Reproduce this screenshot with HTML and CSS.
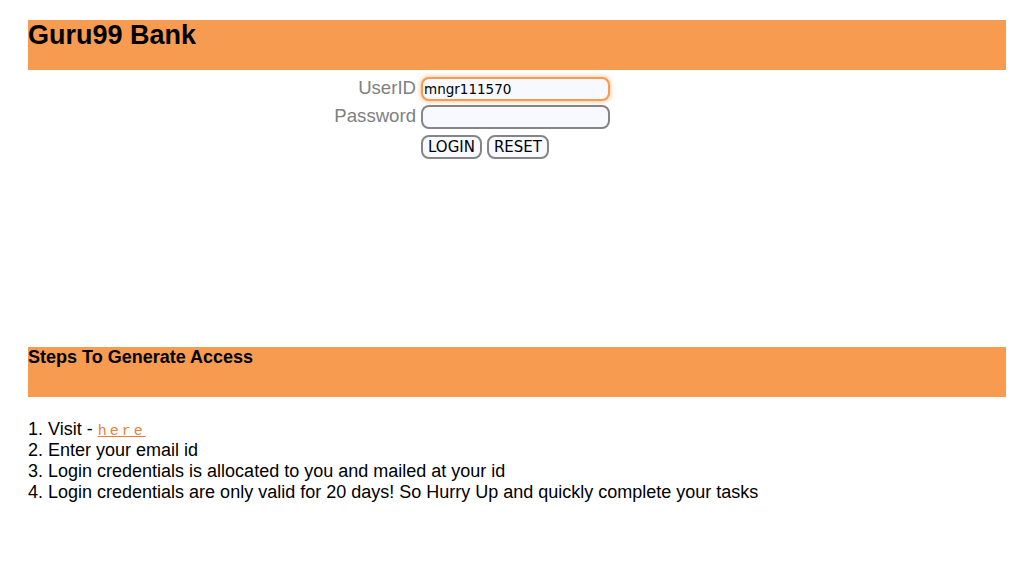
FILE: index.html
```html
<!DOCTYPE html>
<html>
<head>
<meta charset="utf-8">
<title>Guru99 Bank</title>
<link rel="stylesheet" href="styles.css">
</head>
<body>
<div class="page">
  <div class="band band-top">
    <h2 class="brand">Guru99 Bank</h2>
  </div>
  <form class="login">
    <label class="lbl" for="uid">UserID</label>
    <input id="uid" class="field focused" type="text" value="mngr111570">
    <label class="lbl" for="pwd">Password</label>
    <input id="pwd" class="field" type="password">
    <span></span>
    <div class="btns">
      <button type="button" class="btn">LOGIN</button>
      <button type="button" class="btn">RESET</button>
    </div>
  </form>
  <div class="band band-steps">
    <h3 class="steps-title">Steps To Generate Access</h3>
  </div>
  <ol class="steps">
    <li>1. Visit - <a class="here" href="#">here</a></li>
    <li>2. Enter your email id</li>
    <li>3. Login credentials is allocated to you and mailed at your id</li>
    <li>4. Login credentials are only valid for 20 days! So Hurry Up and quickly complete your tasks</li>
  </ol>
</div>
</body>
</html>
```

FILE: styles.css
```css
html, body {
  margin: 0;
  padding: 0;
  background: #ffffff;
}
.page {
  padding: 20px 28px 0 28px;
  font-family: "Liberation Sans", Arial, sans-serif;
  color: #000;
}
.band {
  background: #f79b51;
  height: 50px;
  box-sizing: border-box;
}
.brand {
  margin: 0;
  font-size: 27px;
  font-weight: bold;
  line-height: 30px;
}
.login {
  display: grid;
  grid-template-columns: 388px auto;
  justify-content: start;
  column-gap: 5px;
  row-gap: 4px;
  margin-top: 7px;
  align-items: center;
}
.lbl {
  text-align: right;
  color: #808080;
  font-size: 18.6px;
  line-height: 20px;
  align-self: start;
  margin-top: 1px;
}
.field {
  width: 189px;
  height: 24px;
  box-sizing: border-box;
  border: 2px solid #858585;
  border-radius: 8px;
  background: #f8f8ff;
  padding: 0 1px;
  margin: 0;
  font-family: "DejaVu Sans", Tahoma, sans-serif;
  font-size: 13.5px;
  color: #000;
  outline: none;
}
.field.focused {
  border-color: #f79b51;
  box-shadow: 0 0 4px 1px rgba(247, 155, 81, 0.55);
}
.btns {
  display: flex;
  gap: 5px;
  margin-top: 2px;
}
.btn {
  height: 24px;
  box-sizing: border-box;
  border: 2px solid #858585;
  border-radius: 8px;
  background: #f8f8ff;
  padding: 0 5px;
  font-family: "DejaVu Sans", Tahoma, sans-serif;
  font-size: 15px;
  color: #000;
}
.band-steps {
  margin-top: 188px;
}
.steps-title {
  margin: 0;
  font-size: 18px;
  font-weight: bold;
  line-height: 20px;
}
.steps {
  list-style: none;
  margin: 22px 0 0 0;
  padding: 0;
  font-size: 18px;
  line-height: 21px;
}
.steps li {
  height: 21px;
}
.here {
  color: #e8803a;
  font-family: "Liberation Mono", monospace;
  font-size: 15px;
  line-height: 14px;
  letter-spacing: 3px;
  text-decoration: underline;
}
```
